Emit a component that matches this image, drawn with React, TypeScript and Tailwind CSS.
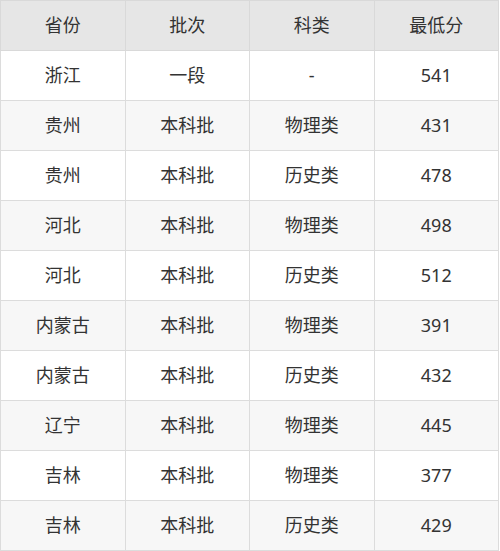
import React from "react";

const rows: [string, string, string, string][] = [
  ["浙江", "一段", "-", "541"],
  ["贵州", "本科批", "物理类", "431"],
  ["贵州", "本科批", "历史类", "478"],
  ["河北", "本科批", "物理类", "498"],
  ["河北", "本科批", "历史类", "512"],
  ["内蒙古", "本科批", "物理类", "391"],
  ["内蒙古", "本科批", "历史类", "432"],
  ["辽宁", "本科批", "物理类", "445"],
  ["吉林", "本科批", "物理类", "377"],
  ["吉林", "本科批", "历史类", "429"],
];

const headers = ["省份", "批次", "科类", "最低分"];

export default function App() {
  return (
    <div
      className="w-[500px] h-[551px] bg-white text-[#333333]"
      style={{ fontFamily: '"Noto Sans", "Noto Sans CJK SC", sans-serif' }}
    >
      <table className="w-[499px] border-collapse table-fixed text-[18px]">
        <thead>
          <tr className="bg-[#e6e6e6]">
            {headers.map((h) => (
              <th
                key={h}
                className="h-[50px] border border-[#d9d9d9] font-normal text-center align-middle p-0"
              >
                {h}
              </th>
            ))}
          </tr>
        </thead>
        <tbody>
          {rows.map((r, i) => (
            <tr key={i} className={i % 2 === 1 ? "bg-[#f7f7f7]" : "bg-white"}>
              {r.map((c, j) => (
                <td
                  key={j}
                  className="h-[50px] border border-[#dcdcdc] text-center align-middle p-0"
                >
                  {c}
                </td>
              ))}
            </tr>
          ))}
        </tbody>
      </table>
    </div>
  );
}
